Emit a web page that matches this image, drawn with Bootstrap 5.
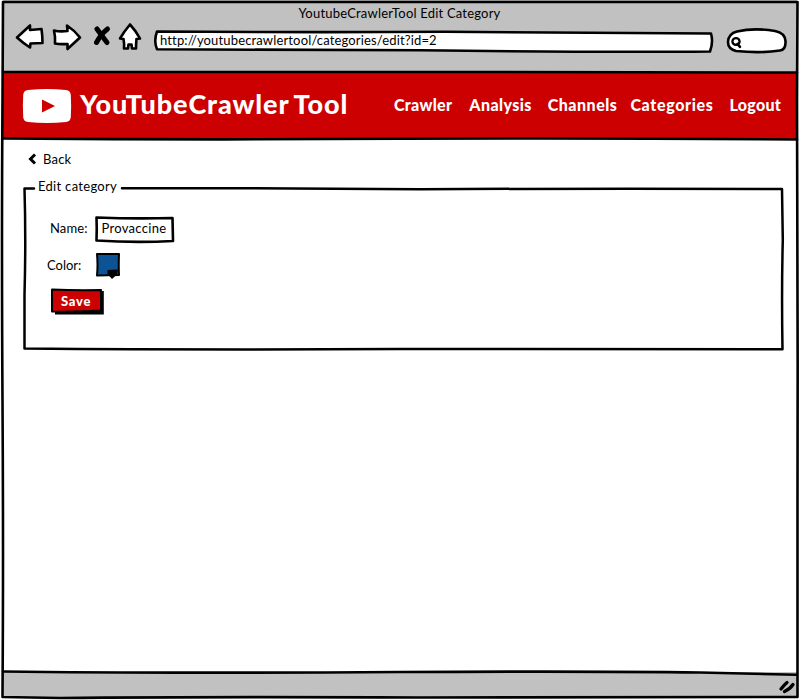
<!DOCTYPE html>
<html lang="en">
<head>
<meta charset="utf-8">
<meta name="viewport" content="width=device-width, initial-scale=1">
<title>YoutubeCrawlerTool Edit Category</title>
<link href="https://cdn.jsdelivr.net/npm/bootstrap@5.3.0/dist/css/bootstrap.min.css" rel="stylesheet">
<style>
body{font-family:Lato,"Noto Sans",sans-serif;font-size:13px;line-height:18px;letter-spacing:.2px;color:#000;background:#fff;overflow:hidden}
svg{display:block;flex:none;overflow:visible}
.win{width:800px;height:700px}
.ink{fill:none;stroke:#000;stroke-width:2.6;stroke-linejoin:round;stroke-linecap:round}
.paper{fill:#fff}
.backdrop{z-index:0;pointer-events:none}
.chrome{height:72px;background:#c1c1c1;margin:0 3px;padding:4px 1px 0 0}
.tools{height:31px;margin:1px 0 0 12px}
.address{width:560px;height:24px;margin:6px 0 0 10px}
.address-text{padding:5px 0 0 6px;letter-spacing:.15px}
.search{margin:5px 0 0 13px}
.sitebar{height:67px;background:#c00;margin:0 3px;padding:0 13px 0 20px}
.brand-name{font-size:27px;font-weight:900;line-height:32px;letter-spacing:.9px;color:#fff;margin:-3px 0 0 9px}
.menu{width:390px}
.sitebar .menu .nav-link{font-size:16px;font-weight:900;line-height:20px;letter-spacing:.3px;color:#fff;padding:0 0 1px}
.sitebar .menu .w-an{margin-left:17px;letter-spacing:.4px}
.sitebar .menu .w-ch{margin-left:16px;letter-spacing:.5px}
.sitebar .menu .w-ca{margin-left:13px;letter-spacing:.65px}
.sitebar .menu .w-lo{margin-left:16px}
.page-area{padding:11px 16px 0 23px}
.back-link{padding-left:5px;height:18px;color:#000}
.back-text{margin-left:7px}
.group{height:164px;width:761px;margin-top:19px;padding-top:29px}
.group-title{left:12px;top:-7px;padding:0 4px 0 3px;letter-spacing:.3px}
.name-row{height:28px;padding-left:27px;letter-spacing:.1px}
.name-row label,.name-text{margin-top:-4px}
.name-field{width:80px;height:28px;margin-left:7px;letter-spacing:.3px}
.name-text{padding-left:7px}
.color-row{height:28px;margin-top:8px;padding-left:24px;letter-spacing:0}
.color-row span{margin-top:-2px}
.swatch{margin-left:14px}
.save{width:54px;height:27px;margin:8px 0 0 27px;color:#fff;font-weight:900;letter-spacing:.7px}
.save span{padding:4px 0 0 11px}
.statusbar{height:26px;background:#c1c1c1;margin:0 3px 2px;padding:4px 3px 0 0}
</style>
<script src="https://cdn.jsdelivr.net/npm/bootstrap@5.3.0/dist/js/bootstrap.bundle.min.js"></script>
</head>
<body>
<div class="win position-relative d-flex flex-column">
  <header class="chrome">
    <div class="text-center">YoutubeCrawlerTool Edit Category</div>
    <div class="tools d-flex">
      <svg width="129" height="30" viewBox="15 23 129 30" class="ink" aria-hidden="true">
        <path class="paper" d="M17 37.5 L30 25.5 L30 30 L41.5 29 Q42.5 36 42.5 43 L30.5 43.5 L30 47.5 Q23 43 17 37.5Z"/>
        <path class="paper" d="M54 30.500 Q60 32 67.500 31 L67 25.500 Q74 30 80 37.500 Q73 44 67.500 49 L67.500 44 Q60 44.500 55 43.500 Q55.500 37 54 30.500Z"/>
        <path d="M97 29 Q102 36 107 42.500 M107.500 29 Q101 34 96.500 42.500" stroke-width="5"/>
        <path class="paper" d="M130 24.500 Q136 31 140 38.500 L136.500 39 Q136 44 136 48.500 L132 48.500 L131.500 44.500 L128.500 44.500 L128 48.500 L124 48.500 Q124.500 44 123.500 39 L120 38.500 Q124.500 31 130 24.500Z"/>
      </svg>
      <div class="address position-relative">
        <svg class="position-absolute top-0 start-0 ink" width="560" height="24" viewBox="154 29 560 24" aria-hidden="true"><path class="paper" d="M157 31.500 Q300 32.500 445 31.800 Q600 32.600 711 33.500 Q713.500 42 710 51.500 Q600 52.500 420 50.300 L157 49.300 Q153.500 41 157 31.500Z"/></svg>
        <div class="address-text position-relative lh-1">http://youtubecrawlertool/categories/edit?id=2</div>
      </div>
      <svg class="search ink" width="60" height="26" viewBox="728 28 60 26" aria-hidden="true">
        <path class="paper" d="M738 31.500 Q755 27.500 776 31 Q786 33 786.500 41 Q787 50 781 50.500 Q762 53.500 737 51 Q729 49 729 42 Q729.500 33.500 738 31.500Z"/>
        <ellipse cx="737" cy="41.500" rx="3.600" ry="3.300" stroke-width="2.300"/><path d="M738.500 44 L741 46.800" stroke-width="2.600"/>
      </svg>
    </div>
  </header>
  <nav class="sitebar navbar navbar-expand d-flex flex-nowrap justify-content-between">
    <a class="d-flex align-items-center text-decoration-none" href="#">
      <svg width="48" height="34" viewBox="0 0 48 34" aria-hidden="true"><path fill="#fff" d="M5 1 Q24 -1 43 1 Q47.500 1.500 47.800 6 Q48.500 17 47.800 28 Q47.500 32.500 43 33 Q24 35 5 33 Q.5 32.500 .2 28 Q-.5 17 .2 6 Q.5 1.500 5 1Z"/><path fill="#c00" d="M19 10.500 L32 17 L19 23.500Z"/></svg>
      <span class="brand-name">YouTubeCrawler<span class="ms-1">Tool</span></span>
    </a>
    <div class="menu navbar-nav flex-row text-nowrap">
      <a class="nav-link" href="#">Crawler</a>
      <a class="nav-link w-an" href="#">Analysis</a>
      <a class="nav-link w-ch" href="#">Channels</a>
      <a class="nav-link w-ca" href="#">Categories</a>
      <a class="nav-link w-lo" href="#">Logout</a>
    </div>
  </nav>
  <main class="page-area flex-grow-1">
    <a class="back-link d-flex align-items-center text-decoration-none" href="#">
      <svg width="8" height="12" viewBox="0 0 8 12" aria-hidden="true"><path d="M7 1.500 L2.500 6 L7 10.500" fill="none" stroke="#000" stroke-width="3"/></svg>
      <span class="back-text">Back</span>
    </a>
    <form class="group position-relative">
      <svg class="position-absolute top-0 start-0 ink" width="761" height="164" viewBox="23 187 761 164" aria-hidden="true"><path d="M34 188.500 H24.500 Q26 240 24.500 295 L24.500 348.500 Q200 350 400 349 L782.500 349.200 Q781.500 290 782.800 240 L782 189 Q600 188.200 420 189.300 Q250 188 122 188.200" stroke-width="2.500"/></svg>
      <div class="group-title position-absolute lh-1">Edit category</div>
      <div class="name-row position-relative d-flex align-items-center">
        <label for="cat">Name:</label>
        <div id="cat" class="name-field position-relative d-flex align-items-center">
          <svg class="position-absolute top-0 start-0 ink" width="80" height="28" viewBox="95 216 80 28" aria-hidden="true"><path class="paper" d="M96.500 217.500 Q135 219 172.500 218 L173 241 Q135 243 96.500 240.500 Q97 229 96.500 217.500Z"/></svg>
          <span class="name-text position-relative">Provaccine</span>
        </div>
      </div>
      <div class="color-row d-flex align-items-center">
        <span>Color:</span>
        <svg class="swatch" width="26" height="28" viewBox="95 252 26 28" aria-hidden="true"><path d="M97 254 L119 254 Q118.500 265 119 275 L97 275.500 Q98 265 97 254Z" fill="#0b5394" stroke="#000" stroke-width="2" stroke-linejoin="round"/><path d="M107.500 270 L118 269.500 L117 274.500 L112 279 L107.500 274Z"/></svg>
      </div>
      <div class="save position-relative" role="button">
        <svg class="position-absolute top-0 start-0" width="54" height="27" viewBox="50 289 54 27" aria-hidden="true"><path d="M55 294 L103.800 292 V315.500 H55Z"/><path d="M52 290.500 Q76 291.500 101 291 L101 311.500 Q76 313 52 312.500Z" fill="#c00" stroke="#000" stroke-width="2" stroke-linejoin="round"/></svg>
        <span class="position-relative d-block">Save</span>
      </div>
    </form>
  </main>
  <footer class="statusbar d-flex align-items-center justify-content-end">
    <svg class="ink" width="16" height="14" viewBox="777 680 16 14" aria-hidden="true"><path d="M780 689 Q783 685 786 682.500 M783.500 691.500 Q789 689 792 684.500" stroke-width="3.300"/></svg>
  </footer>
  <svg class="backdrop ink position-absolute top-0 start-0" width="800" height="700" viewBox="0 0 800 700" aria-hidden="true">
    <path d="M3 2 Q400 2.500 797.500 2 L797 100 Q798 300 797.500 500 L797.500 697 Q600 698 420 697.500 Q200 696.500 60 698 L2.500 697 Q3.500 560 2.500 400 Q1.500 240 2.500 100Z"/>
    <path d="M3 72 Q300 73 500 72 L797 72.500 M3 138.500 Q200 140 400 138.800 Q600 138 797 139.500"/>
    <path d="M3 671.500 Q150 673.500 400 672 Q600 671 700 672.500 Q760 674 797 674.800"/>
  </svg>
</div>
</body>
</html>
